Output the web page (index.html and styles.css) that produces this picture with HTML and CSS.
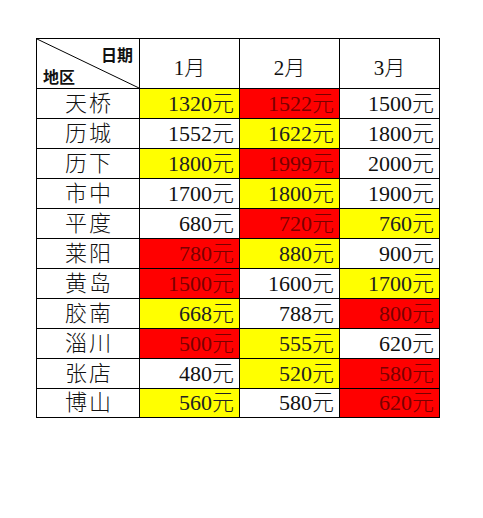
FILE: index.html
```html
<!DOCTYPE html>
<html lang="zh">
<head>
<meta charset="utf-8">
<link rel="stylesheet" href="styles.css">
</head>
<body>
<table class="sheet">
  <colgroup><col class="c-name"><col class="c-m"><col class="c-m"><col class="c-m"></colgroup>
  <thead>
    <tr class="head">
      <th class="corner">
        <svg class="diag" viewBox="0 0 100 100" preserveAspectRatio="none"><line x1="0" y1="0" x2="100" y2="100" stroke="#000" stroke-width="1" vector-effect="non-scaling-stroke"/></svg>
        <span class="lbl-date">日期</span>
        <span class="lbl-area">地区</span>
      </th>
      <th class="month">1月</th>
      <th class="month">2月</th>
      <th class="month">3月</th>
    </tr>
  </thead>
  <tbody>
    <tr><td class="name">天桥</td><td class="v y">1320元</td><td class="v r">1522元</td><td class="v">1500元</td></tr>
    <tr><td class="name">历城</td><td class="v">1552元</td><td class="v y">1622元</td><td class="v">1800元</td></tr>
    <tr><td class="name">历下</td><td class="v y">1800元</td><td class="v r">1999元</td><td class="v">2000元</td></tr>
    <tr><td class="name">市中</td><td class="v">1700元</td><td class="v y">1800元</td><td class="v">1900元</td></tr>
    <tr><td class="name">平度</td><td class="v">680元</td><td class="v r">720元</td><td class="v y">760元</td></tr>
    <tr><td class="name">莱阳</td><td class="v r">780元</td><td class="v y">880元</td><td class="v">900元</td></tr>
    <tr><td class="name">黄岛</td><td class="v r">1500元</td><td class="v">1600元</td><td class="v y">1700元</td></tr>
    <tr><td class="name">胶南</td><td class="v y">668元</td><td class="v">788元</td><td class="v r">800元</td></tr>
    <tr><td class="name">淄川</td><td class="v r">500元</td><td class="v y">555元</td><td class="v">620元</td></tr>
    <tr><td class="name">张店</td><td class="v">480元</td><td class="v y">520元</td><td class="v r">580元</td></tr>
    <tr class="last"><td class="name">博山</td><td class="v y">560元</td><td class="v">580元</td><td class="v r">620元</td></tr>
  </tbody>
</table>
</body>
</html>
```
FILE: styles.css
```css
html, body {
  margin: 0;
  padding: 0;
  background: #fff;
}
body {
  padding: 38px 0 0 36px;
  font-family: "Liberation Serif", "Noto Sans CJK SC", serif;
  color: #111;
}
.sheet {
  border-collapse: collapse;
  table-layout: fixed;
  width: 404px;
}
.c-name { width: 103px; }
.c-m { width: 100px; }
.sheet th, .sheet td {
  border: 1px solid #000;
  padding: 0;
}
.head { height: 50px; }
.sheet tbody tr { height: 30px; }
.sheet tbody tr.last { height: 29px; }
.sheet .corner {
  position: relative;
  font-family: "Noto Sans CJK SC", sans-serif;
  font-weight: bold;
  font-size: 16px;
  line-height: 1;
}
.diag {
  position: absolute;
  left: 0;
  top: 0;
  width: 100%;
  height: 100%;
}
.lbl-date {
  position: absolute;
  right: 6px;
  top: 7px;
}
.lbl-area {
  position: absolute;
  left: 6px;
  bottom: 4px;
}
.sheet .month {
  font-weight: 300;
  font-size: 21px;
  text-align: center;
  vertical-align: middle;
  padding-top: 4px;
}
.sheet .name {
  font-size: 22px;
  font-weight: 300;
  text-align: center;
  line-height: 28px;
  letter-spacing: 2px;
  padding-left: 2px;
}
.sheet .v {
  font-size: 22px;
  font-weight: 300;
  text-align: right;
  padding-right: 5px;
  line-height: 28px;
  white-space: nowrap;
}
.y { background: #ffff00; color: #222; }
.r { background: #ff0000; color: #7a0000; }
```
